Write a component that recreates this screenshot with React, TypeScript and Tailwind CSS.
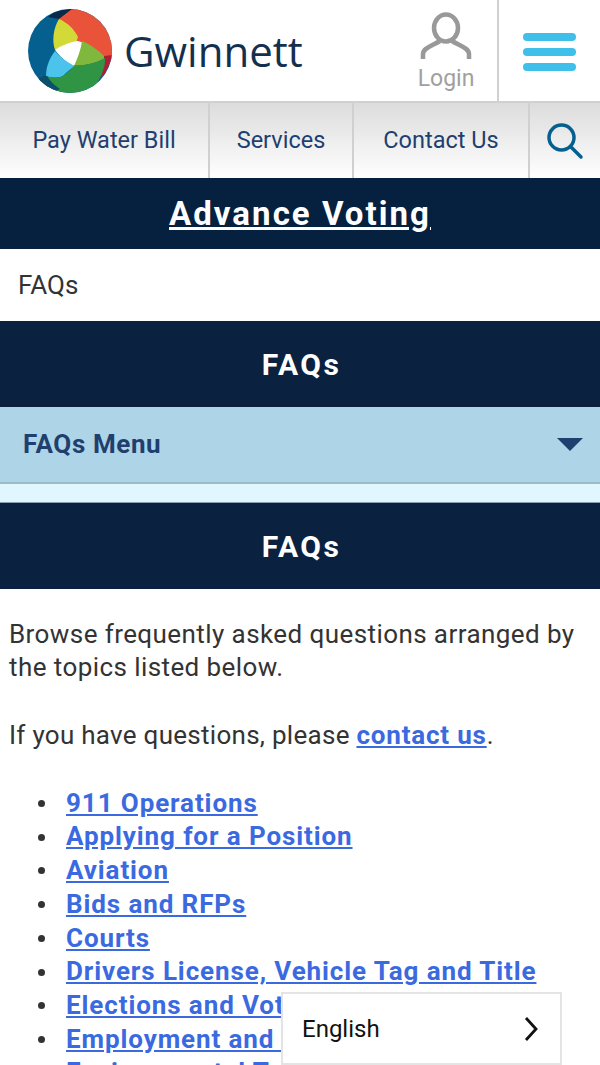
const topics = [
  "911 Operations",
  "Applying for a Position",
  "Aviation",
  "Bids and RFPs",
  "Courts",
  "Drivers License, Vehicle Tag and Title",
  "Elections and Voting",
  "Employment and Training",
  "Environmental Topics",
];

const Logo = () => (
  <svg width="84" height="84" viewBox="0 0 84 84" className="shrink-0">
    <defs>
      <clipPath id="ball">
        <circle cx="42" cy="42" r="42" />
      </clipPath>
    </defs>
    <g clipPath="url(#ball)">
      <rect width="84" height="84" fill="#05608f" />
      <path d="M20 8 C26 2 36 0 46 0 L40 4 L31 10Z" fill="#0b2a4a" />
      <path d="M31 10 L44 0 L84 0 L84 50 L76 50 L60 40 L47 36Z" fill="#e9533a" />
      <path d="M84 37 L86 46 L76 66 L70 70 L76 47 L84 46Z" fill="#b01f35" />
      <path d="M31 10 C40 14 46 20 50 28 L48 34 C40 35 32 38 27 41 C24 32 25 20 31 10Z" fill="#d3da38" />
      <path d="M27 41 C32 37 42 33 50 32 L56 34 L48 58 C39 54 32 48 27 41Z" fill="#ffffff" />
      <path d="M54 32 C62 35 70 41 76 47 L76 50 C68 54 56 57 46 57 C50 48 53 40 54 32Z" fill="#7fb83d" />
      <path d="M27 42 C32 48 38 53 47 57 C42 60 38 64 35 67 C30 69 24 69 18 67 C18 58 21 50 27 42Z" fill="#4cc3ea" />
      <path d="M77 49 C78 58 72 72 62 84 L0 84 L14 66 L19 67 C24 69 30 69 35 67 C39 64 43 60 47 56 C57 57 68 54 77 49Z" fill="#2f9444" />
      <path d="M15 66 L19 67 C22 72 26 76 32 80 L24 84 L10 70Z" fill="#0c4f6b" />
    </g>
  </svg>
);

const NavItem = ({ label, width }: { label: string; width: string }) => (
  <div className={`flex items-center justify-center border-r-2 border-[#d0d0d0] text-[#1f3f6e] text-[23.5px] ${width}`}>
    {label}
  </div>
);

export default function App() {
  return (
    <div className="relative h-[1065px] overflow-hidden bg-white font-['Roboto',sans-serif]">
      <header className="flex h-[101px] items-stretch">
        <div className="flex flex-1 items-center gap-[12px] pl-7 pt-[1px]">
          <Logo />
          <span className="font-['Open_Sans',sans-serif] text-[42px] font-medium leading-none text-[#14304f]">Gwinnett</span>
        </div>
        <div className="flex w-[104px] flex-col items-center border-r-2 border-[#d0d0d0] pt-3">
          <svg width="52" height="50" viewBox="0 0 52 50" fill="none" stroke="#999999" strokeWidth="4.5">
            <ellipse cx="26" cy="16" rx="12" ry="13.5" />
            <path d="M3 47 L3 42 C3 36 12 34 20 29 M49 47 L49 42 C49 36 40 34 32 29" />
          </svg>
          <span className="mt-[3px] text-[23px] leading-7 text-[#a0a0a0]">Login</span>
        </div>
        <div className="flex w-[101px] flex-col items-center justify-center gap-[7px] pt-[3px]">
          <span className="h-2 w-[53px] rounded-full bg-[#3fc0ea]" />
          <span className="h-2 w-[53px] rounded-full bg-[#3fc0ea]" />
          <span className="h-2 w-[53px] rounded-full bg-[#3fc0ea]" />
        </div>
      </header>

      <nav className="flex h-[77px] border-t-2 border-[#d0d0d0] bg-gradient-to-b from-[#dcdcdc] to-white">
        <NavItem label="Pay Water Bill" width="w-[210px]" />
        <NavItem label="Services" width="w-[144px]" />
        <NavItem label="Contact Us" width="w-[176px]" />
        <div className="flex flex-1 items-center justify-center">
          <svg width="38" height="38" viewBox="0 0 38 38" fill="none" stroke="#05608f" strokeWidth="3.5" strokeLinecap="round">
            <circle cx="15.5" cy="15.5" r="12.5" />
            <path d="M25 25 L35 35" />
          </svg>
        </div>
      </nav>

      <div className="flex h-[71px] items-center justify-center bg-[#06213f]">
        <a className="text-[33px] font-bold tracking-[2.05px] text-white underline">Advance Voting</a>
      </div>

      <div className="flex h-[72px] items-center px-[18px] text-[26px] text-[#333333]">FAQs</div>

      <div className="flex h-[86px] items-center justify-center bg-[#0a2240] pl-[3px] text-[30px] font-bold tracking-[2.5px] text-white">FAQs</div>

      <div className="flex h-[77px] items-center justify-between border-b-2 border-[#9dbccb] bg-[#aed4e8] pl-[23px] pr-[17px]">
        <span className="text-[26px] font-bold tracking-[0.6px] text-[#1f3f6e]">FAQs Menu</span>
        <span className="h-0 w-0 border-x-[13px] border-t-[13px] border-x-transparent border-t-[#1f3f6e]" />
      </div>

      <div className="h-[19px] border-b border-[#8b9fae] bg-[#e0f7ff]" />

      <div className="flex h-[86px] items-center justify-center bg-[#0a2240] pl-[3px] text-[30px] font-bold tracking-[2.5px] text-white">FAQs</div>

      <main className="px-[9px] pt-[28.6px] text-[26px] leading-[33.7px] tracking-[0.42px] text-[#333333]">
        <p>Browse frequently asked questions arranged by the topics listed below.</p>
        <p className="mt-[34px] tracking-[0.28px]">
          If you have questions, please <a className="font-bold tracking-[0.8px] text-[#3b6ae0] underline">contact us</a>.
        </p>
        <ul className="mt-[34px] pl-[29px] font-bold tracking-[0.9px] text-[#3b6ae0]">
          {topics.map((topic) => (
            <li key={topic} className="flex items-center gap-[21px]">
              <span className="h-[7px] w-[7px] shrink-0 rounded-full bg-[#333333]" />
              <a className="underline whitespace-nowrap">{topic}</a>
            </li>
          ))}
        </ul>
      </main>

      <div className="absolute left-[281px] top-[992px] flex h-[73px] w-[281px] items-center justify-between border-2 border-[#e4e4e4] bg-white pl-[19px] pr-[22px]">
        <span className="text-[24px] text-[#111111]">English</span>
        <svg width="14" height="26" viewBox="0 0 14 26" fill="none" stroke="#111111" strokeWidth="2.8">
          <path d="M2 2 L12 13 L2 24" />
        </svg>
      </div>
    </div>
  );
}
